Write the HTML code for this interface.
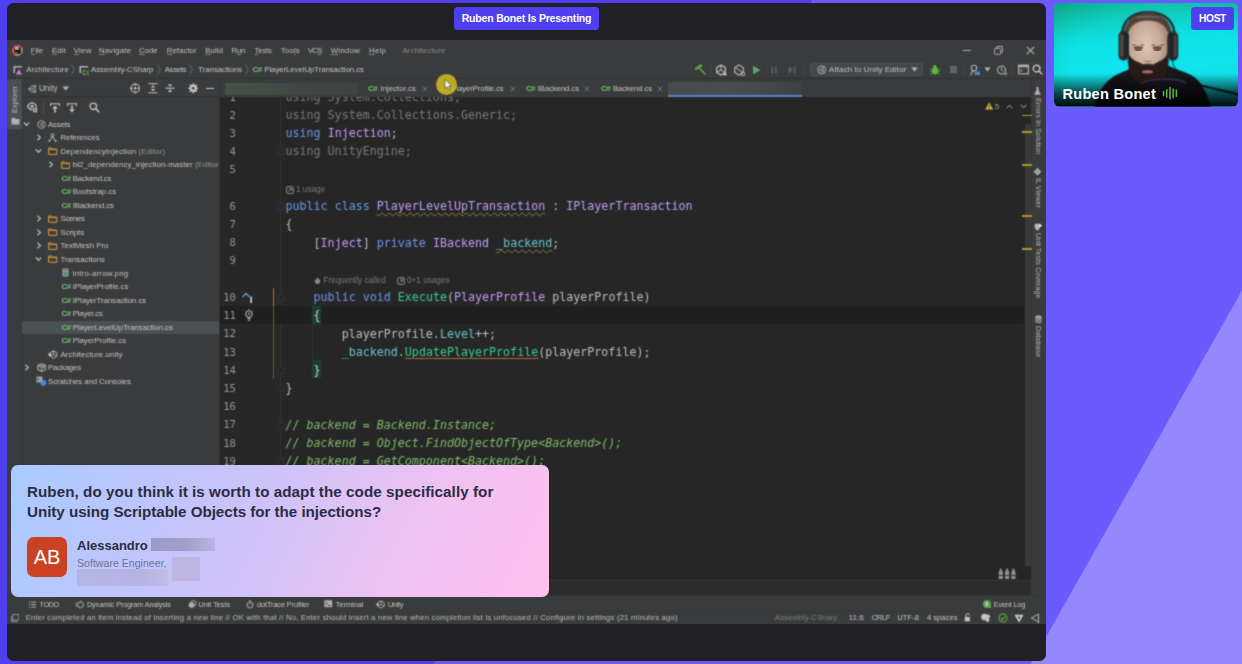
<!DOCTYPE html>
<html lang="en">
<head>
<meta charset="utf-8">
<title>Ruben Bonet Is Presenting</title>
<style>
*{box-sizing:border-box;margin:0;padding:0}
html,body{width:1242px;height:664px;overflow:hidden}
body{position:relative;background:#6b5bff;font-family:"Liberation Sans",sans-serif;}
.abs{position:absolute}
#bgsvg{position:absolute;left:0;top:0;width:1242px;height:664px}
#panel{position:absolute;left:7px;top:3px;width:1039px;height:657.5px;border-radius:6.5px;background:#202025;overflow:hidden}
#present{position:absolute;left:454px;top:7px;width:145px;height:23px;border-radius:3.5px;background:#4f3fee;color:#fff;font-weight:700;font-size:10.5px;letter-spacing:-0.18px;line-height:23px;text-align:center;white-space:nowrap}
/* IDE */
#ide{position:absolute;left:7px;top:40px;width:1039px;height:584px;background:#3a3b3c;overflow:hidden;color:#c6c6c6;font-size:7.8px;filter:url(#soft)}
#ide .t{position:absolute;white-space:pre;line-height:10px;height:10px}
#menubar .t{top:5px}
#nav .t{top:24.8px}

.cl{position:absolute;white-space:pre;font-family:"DejaVu Sans Mono","Liberation Mono",monospace;font-size:11.67px;line-height:18.21px;height:18.21px;color:#bdbdbd}
.ln{position:absolute;width:30px;text-align:right;font-family:"DejaVu Sans Mono","Liberation Mono",monospace;font-size:10.6px;line-height:18.21px;height:18.21px;color:#969696}
.k{color:#6c95eb}.c{color:#c39cf8}.m{color:#39cc8f}.f{color:#66c3cc}.d{color:#787878}.g{color:#7fbb69;font-style:italic}
.wv{text-decoration:underline wavy #8c7c3a 0.5px;text-underline-offset:2px}
.wo{text-decoration:underline #b4693c 1px;text-underline-offset:2px}
.br{color:#d0d0d0}
#ide u{text-decoration:underline;text-underline-offset:1px;text-decoration-thickness:0.5px;text-decoration-color:rgba(190,190,190,0.55)}
/* card */
#card{position:absolute;left:11px;top:464.5px;width:538px;height:132.5px;border-radius:7px;background:linear-gradient(116deg,#a9cbff 0%,#c9c3fa 40%,#f0c2f1 75%,#ffc0ee 100%);overflow:hidden}
#q{position:absolute;left:16px;top:17px;width:500px;font-weight:700;font-size:15.2px;line-height:20px;color:#2c2c44;white-space:pre;letter-spacing:0.08px}
#av{position:absolute;left:16px;top:72.5px;width:40px;height:40px;border-radius:7px;background:#cb4124;color:#fff;font-size:20px;line-height:40px;text-align:center}
#nm{position:absolute;left:66px;top:73px;font-weight:700;font-size:13px;line-height:16px;color:#2c2c44;white-space:pre}
#ttl{position:absolute;left:66px;top:91px;font-size:10.6px;line-height:14px;color:#74748c;white-space:pre}
.red{position:absolute}
/* tile */
#tile{position:absolute;left:1054px;top:3px;width:184px;height:103.5px;border-radius:6px;overflow:hidden;background:#12d8d4}
#tile svg{position:absolute;left:0;top:0;width:184px;height:103.5px}
#host{position:absolute;left:137px;top:4px;width:43px;height:22.5px;border-radius:3.5px;background:#4f3fee;color:#fff;font-weight:700;font-size:10.2px;letter-spacing:-0.35px;line-height:24.3px;text-align:center}
#rb{position:absolute;left:8.5px;top:82.3px;color:#fff;font-weight:700;font-size:14.6px;letter-spacing:0.25px;line-height:18px;white-space:pre}
</style>
</head>
<body>
<svg width="0" height="0" style="position:absolute"><defs>
  <filter id="soft" x="0" y="0" width="100%" height="100%" color-interpolation-filters="sRGB"><feConvolveMatrix order="3" kernelMatrix="1 2 1 2 9 2 1 2 1" divisor="21" edgeMode="duplicate" preserveAlpha="true"/></filter>
</defs></svg>
<svg id="bgsvg" viewBox="0 0 1242 664">
  <polygon points="0,0 812.3,0 433.8,664 0,664" fill="#4f3fee"/>
  <polygon points="1242,290.5 1242,664 1030.8,664" fill="#9488ff"/>
</svg>

<div id="panel"></div>
<div id="present">Ruben Bonet Is Presenting</div>

<div id="ide">
<div class="abs" style="left:212.50px;top:57.00px;width:811.50px;height:483.00px;background:#262626"></div>
<div class="abs" style="left:212.50px;top:57.00px;width:61.50px;height:483.00px;background:#272727;border-right:0.8px solid #323232"></div>
<div class="abs" style="left:212.50px;top:540.00px;width:811.50px;height:15.50px;background:#2b2b2b;border-top:1px solid #383838"></div>
<div class="abs" style="left:0.00px;top:38.30px;width:1039.00px;height:1.00px;background:#2d2f30"></div>
<div class="abs" style="left:0.00px;top:39.00px;width:15.00px;height:50.00px;background:#4c4f51"></div>
<div class="abs" style="left:14.60px;top:39.00px;width:0.80px;height:518.00px;background:#323536"></div>
<div class="abs" style="left:211.70px;top:39.00px;width:0.90px;height:518.00px;background:#2f3132"></div>
<div class="abs" style="left:1024.00px;top:39.00px;width:0.80px;height:517.00px;background:#323536"></div>
<div class="abs" style="left:0.00px;top:555.30px;width:1039.00px;height:0.90px;background:#323536"></div>
<div class="abs" style="left:0.00px;top:570.60px;width:1039.00px;height:0.80px;background:#353839"></div>
<svg class="abs" style="left:5.30px;top:4.80px;width:11px;height:11px;" viewBox="0 0 11 11"><defs><linearGradient id="lg1" x1="0" y1="0" x2="1" y2="1"><stop offset="0" stop-color="#dd3a72"/><stop offset="0.45" stop-color="#d8456a"/><stop offset="0.55" stop-color="#e89a38"/><stop offset="1" stop-color="#3b7fe8"/></linearGradient><linearGradient id="lg2" x1="0" y1="1" x2="1" y2="0"><stop offset="0" stop-color="#f2a634"/><stop offset="0.5" stop-color="#f2a634" stop-opacity="0"/><stop offset="1" stop-color="#b03065"/></linearGradient></defs><path d="M2.500 0.600L8 0.300 10.600 3.500 10.300 8.200 7.500 10.700 3 10.500 0.400 7.500 0.500 3z" fill="url(#lg1)"/><path d="M2.500 0.600L8 0.300 10.600 3.500 10.300 8.200 7.500 10.700 3 10.500 0.400 7.500 0.500 3z" fill="url(#lg2)" opacity="0.750"/><rect x="2.300" y="2.300" width="6.400" height="6.400" fill="#0c0c0c"/><text x="2.700" y="5.400" font-family="Liberation Sans, sans-serif" font-weight="700" font-size="3.300" fill="#fff">RD</text><rect x="2.900" y="7.200" width="2.600" height="0.700" fill="#e8c070"/></svg>
<span class="t" style="left:23.80px;top:5.90px;color:#c0c0c0;font-size:7.80px;letter-spacing:-0.117px;"><u>F</u>ile</span>
<span class="t" style="left:44.90px;top:5.90px;color:#c0c0c0;font-size:7.80px;letter-spacing:0.165px;"><u>E</u>dit</span>
<span class="t" style="left:66.70px;top:5.90px;color:#c0c0c0;font-size:7.80px;letter-spacing:0.283px;"><u>V</u>iew</span>
<span class="t" style="left:92.00px;top:5.90px;color:#c0c0c0;font-size:7.80px;letter-spacing:0.177px;"><u>N</u>avigate</span>
<span class="t" style="left:131.90px;top:5.90px;color:#c0c0c0;font-size:7.80px;letter-spacing:0.013px;"><u>C</u>ode</span>
<span class="t" style="left:159.70px;top:5.90px;color:#c0c0c0;font-size:7.80px;letter-spacing:0.065px;"><u>R</u>efactor</span>
<span class="t" style="left:198.30px;top:5.90px;color:#c0c0c0;font-size:7.80px;letter-spacing:0.071px;"><u>B</u>uild</span>
<span class="t" style="left:224.60px;top:5.90px;color:#c0c0c0;font-size:7.80px;letter-spacing:-0.270px;">R<u>u</u>n</span>
<span class="t" style="left:247.60px;top:5.90px;color:#c0c0c0;font-size:7.80px;letter-spacing:-0.221px;"><u>T</u>ests</span>
<span class="t" style="left:273.80px;top:5.90px;color:#c0c0c0;font-size:7.80px;letter-spacing:0.178px;">Too<u>l</u>s</span>
<span class="t" style="left:300.90px;top:5.90px;color:#c0c0c0;font-size:7.80px;letter-spacing:-0.780px;">VC<u>S</u></span>
<span class="t" style="left:323.70px;top:5.90px;color:#c0c0c0;font-size:7.80px;letter-spacing:0.310px;"><u>W</u>indow</span>
<span class="t" style="left:362.10px;top:5.90px;color:#c0c0c0;font-size:7.80px;letter-spacing:0.214px;"><u>H</u>elp</span>
<span class="t" style="left:395.50px;top:5.90px;color:#8c8c8c;font-size:7.80px;letter-spacing:0.107px;">Architecture</span>
<div class="abs" style="left:955.50px;top:10.00px;width:8.50px;height:1.00px;background:#a8a8a8"></div>
<svg class="abs" style="left:987.00px;top:5.50px;width:9px;height:9px;" viewBox="0 0 9 9"><rect x="0.6" y="2.4" width="6" height="6" rx="1" fill="none" stroke="#b0b0b0" stroke-width="1"/><path d="M2.6 2.2V1.2a.7.7 0 0 1 .7-.7H8a.6.6 0 0 1 .6.6v4.6a.7.7 0 0 1-.7.7H6.8" fill="none" stroke="#b0b0b0" stroke-width="1"/></svg>
<svg class="abs" style="left:1018.50px;top:5.50px;width:9px;height:9px;" viewBox="0 0 9 9"><path d="M0.8 0.8L8.2 8.2M8.2 0.8L0.8 8.2" stroke="#b8b8b8" stroke-width="1.1" fill="none"/></svg>
<svg class="abs" style="left:6.00px;top:25.00px;width:10px;height:10px;" viewBox="0 0 10 10"><path d="M0.5 1h8.5v1.6h-7v5.5h-1.5z" fill="#aeb3b8"/><path d="M6 4.2l3.2 5.3h-6.4z" fill="#c77dd8"/></svg>
<span class="t" style="left:19.20px;top:24.80px;;font-size:7.80px;letter-spacing:0.099px;">Architecture</span>
<svg class="abs" style="left:64.30px;top:24.30px;width:4px;height:11px;" viewBox="0 0 4 11"><path d="M0.500 0.500L3.300 5.500 0.500 10.500" fill="none" stroke="#707274" stroke-width="0.800"/></svg>
<svg class="abs" style="left:71.50px;top:25.00px;width:10px;height:10px;" viewBox="0 0 10 10"><path d="M0.5 1h8.5v1.6h-7v5.5h-1.5z" fill="#aeb3b8"/><text x="3" y="9.5" font-family="Liberation Sans, sans-serif" font-weight="700" font-size="6.5" fill="#62b543">C#</text></svg>
<span class="t" style="left:84.00px;top:24.80px;;font-size:7.80px;letter-spacing:-0.030px;">Assembly-CSharp</span>
<svg class="abs" style="left:149.80px;top:24.30px;width:4px;height:11px;" viewBox="0 0 4 11"><path d="M0.500 0.500L3.300 5.500 0.500 10.500" fill="none" stroke="#707274" stroke-width="0.800"/></svg>
<span class="t" style="left:157.70px;top:24.80px;;font-size:7.80px;letter-spacing:-0.318px;">Assets</span>
<svg class="abs" style="left:182.30px;top:24.30px;width:4px;height:11px;" viewBox="0 0 4 11"><path d="M0.500 0.500L3.300 5.500 0.500 10.500" fill="none" stroke="#707274" stroke-width="0.800"/></svg>
<span class="t" style="left:191.30px;top:24.80px;;font-size:7.80px;letter-spacing:-0.039px;">Transactions</span>
<svg class="abs" style="left:237.80px;top:24.30px;width:4px;height:11px;" viewBox="0 0 4 11"><path d="M0.500 0.500L3.300 5.500 0.500 10.500" fill="none" stroke="#707274" stroke-width="0.800"/></svg>
<span class="t" style="left:245.50px;top:24.80px;color:#74c870;font-weight:700;font-size:8px;letter-spacing:-0.55px">C#</span>
<span class="t" style="left:257.30px;top:24.80px;;font-size:7.80px;letter-spacing:-0.058px;">PlayerLevelUpTransaction.cs</span>
<svg class="abs" style="left:687.50px;top:23.80px;width:11.5px;height:11.5px;" viewBox="0 0 11.5 11.5"><path d="M1.300 4.600L5.800 1.600" stroke="#5fa04b" stroke-width="2.700" stroke-linecap="square"/><path d="M4.300 3.800L10 10" stroke="#5fa04b" stroke-width="1.700" stroke-linecap="round"/></svg>
<div class="abs" style="left:702.80px;top:23.00px;width:0.80px;height:13.00px;background:#444648"></div>
<svg class="abs" style="left:708.00px;top:23.50px;width:12px;height:12px;" viewBox="0 0 12 12"><path d="M6 1l4.3 2.5v5L6 11 1.7 8.500v-5z" fill="none" stroke="#c4c4c4" stroke-width="1.2"/><path d="M6 6V1M6 6l4.300 2.500M6 6l-4.300 2.500" stroke="#c4c4c4" stroke-width="1"/><circle cx="10" cy="10" r="1.6" fill="#c4c4c4"/></svg>
<svg class="abs" style="left:726.00px;top:23.50px;width:12px;height:12px;" viewBox="0 0 12 12"><path d="M6 1l4.3 2.5v5L6 11 1.7 8.500v-5z" fill="none" stroke="#b8b8b8" stroke-width="1.2"/><path d="M3 4l6 4" stroke="#b8b8b8" stroke-width="1"/><circle cx="10" cy="10" r="1.800" fill="none" stroke="#b8b8b8" stroke-width="1"/></svg>
<svg class="abs" style="left:744.00px;top:23.50px;width:11px;height:12px;" viewBox="0 0 11 12"><path d="M2 1.800l7.500 4.200-7.500 4.200z" fill="#59a869"/></svg>
<svg class="abs" style="left:763.00px;top:24.50px;width:8px;height:10px;" viewBox="0 0 8 10"><rect x="1.500" y="1.500" width="1.500" height="7" fill="#5e6163"/><rect x="5" y="1.500" width="1.500" height="7" fill="#5e6163"/></svg>
<svg class="abs" style="left:780.00px;top:24.50px;width:10px;height:10px;" viewBox="0 0 10 10"><path d="M1.500 1.500l5 3.500-5 3.500z" fill="#5e6163"/><rect x="7" y="1.500" width="1.400" height="7" fill="#5e6163"/></svg>
<div class="abs" style="left:797.00px;top:23.00px;width:0.80px;height:13.00px;background:#424446"></div>
<div class="abs" style="left:802.60px;top:23.00px;width:113.40px;height:13.20px;background:#45484a;border:0.600px solid #4c4f51;border-radius:2px"></div>
<svg class="abs" style="left:809.80px;top:24.60px;width:9.5px;height:9.5px;" viewBox="0 0 10.5 10.5"><circle cx="5.250" cy="5.250" r="4.300" fill="none" stroke="#bdbdbd" stroke-width="1"/><path d="M6.800 2.800L3 5.300l3.800 2.500z" fill="none" stroke="#bdbdbd" stroke-width="0.900"/></svg>
<span class="t" style="left:822.00px;top:25.10px;color:#c2c2c2;font-size:7.80px;letter-spacing:0.192px;">Attach to Unity Editor</span>
<svg class="abs" style="left:904.00px;top:27.00px;width:7px;height:5px;" viewBox="0 0 7 5"><path d="M0.300 0.500h6.400L3.500 4.500z" fill="#b4b4b4"/></svg>
<svg class="abs" style="left:922.00px;top:23.50px;width:12px;height:12px;" viewBox="0 0 12 12"><ellipse cx="6" cy="6.800" rx="3" ry="3.800" fill="#62b543"/><circle cx="6" cy="2.800" r="1.700" fill="#62b543"/><path d="M1.300 4.500l2 1.200M10.700 4.500l-2 1.200M1 7.200h2.300M11 7.200H8.700M1.500 10.300l2-1.300M10.500 10.300l-2-1.300" stroke="#62b543" stroke-width="0.900"/></svg>
<div class="abs" style="left:942.50px;top:25.70px;width:7.00px;height:7.00px;background:#606365"></div>
<div class="abs" style="left:957.00px;top:23.00px;width:0.80px;height:13.00px;background:#424446"></div>
<svg class="abs" style="left:962.00px;top:23.50px;width:12px;height:12px;" viewBox="0 0 12 12"><circle cx="5" cy="4" r="2.700" fill="none" stroke="#b0b0b0" stroke-width="1.100"/><path d="M2 11c0-2.500 1.500-3.800 3-3.800" stroke="#b0b0b0" stroke-width="1.100" fill="none"/><rect x="5.500" y="7.500" width="5.500" height="3.500" fill="#4a88c7"/></svg>
<svg class="abs" style="left:976.50px;top:27.30px;width:7px;height:5px;" viewBox="0 0 7 5"><path d="M0.300 0.500h6.400L3.500 4.500z" fill="#b4b4b4"/></svg>
<svg class="abs" style="left:989.00px;top:23.50px;width:13px;height:12px;" viewBox="0 0 13 12"><circle cx="5.500" cy="6" r="4" fill="none" stroke="#b8b8b8" stroke-width="1.100"/><path d="M5.500 3.500V6l1.800 1" stroke="#b8b8b8" stroke-width="1" fill="none"/><path d="M8.500 7.500l3.500 2.200-3.500 2.200z" fill="#59a869"/></svg>
<div class="abs" style="left:1005.00px;top:23.00px;width:0.80px;height:13.00px;background:#424446"></div>
<svg class="abs" style="left:1010.50px;top:24.00px;width:11px;height:11px;" viewBox="0 0 11 11"><rect x="0.600" y="1.200" width="9.800" height="8.600" fill="none" stroke="#b8b8b8" stroke-width="1.100"/><rect x="0.600" y="1.200" width="9.800" height="2" fill="#b8b8b8"/><path d="M2.500 5l2 1.500-2 1.500z" fill="#b8b8b8"/></svg>
<svg class="abs" style="left:1025.00px;top:24.00px;width:11px;height:11px;" viewBox="0 0 11 11"><circle cx="4.500" cy="4.500" r="3.300" fill="none" stroke="#c0c0c0" stroke-width="1.400"/><path d="M7 7l3.200 3.200" stroke="#c0c0c0" stroke-width="1.600"/></svg>
<span class="t" style="left:3.30px;top:73.20px;transform:rotate(-90deg);transform-origin:0 0;font-size:7.300px;color:#b8b8b8">Explorer</span>
<svg class="abs" style="left:3.50px;top:76.80px;width:9px;height:8px;" viewBox="0 0 9 8"><path d="M0.500 0.800h3l1 1.200h4v5.500h-8z" fill="#aeb3b8"/></svg>
<svg class="abs" style="left:21.00px;top:44.50px;width:8.5px;height:8px;" viewBox="0 0 8.5 8"><path d="M0.600 4L3.200 1.200 7.600 0.600 7 3.300 7.600 7.400 3.200 6.800z" fill="none" stroke="#b4b4b4" stroke-width="0.900"/><path d="M0.600 4H4.400L7.600 0.600M4.400 4L7.600 7.400" fill="none" stroke="#b4b4b4" stroke-width="0.900"/></svg>
<span class="t" style="left:31.90px;top:44.00px;color:#c0c0c0;font-size:8.2px">Unity</span>
<svg class="abs" style="left:55.30px;top:46.30px;width:7.5px;height:5px;" viewBox="0 0 7.5 5"><path d="M0.300 0.500h6.900L3.750 4.600z" fill="#b4b4b4"/></svg>
<svg class="abs" style="left:122.50px;top:43.30px;width:10.5px;height:10.5px;" viewBox="0 0 10.5 10.5"><circle cx="5.250" cy="5.250" r="4.200" fill="none" stroke="#c4c4c4" stroke-width="1.100"/><circle cx="5.250" cy="5.250" r="1.300" fill="#c4c4c4"/><path d="M5.250 0v3M5.250 7.500v3M0 5.250h3M7.500 5.250h3" stroke="#c4c4c4" stroke-width="1"/></svg>
<svg class="abs" style="left:141.00px;top:43.30px;width:10px;height:10.5px;" viewBox="0 0 10 10.5"><path d="M0.500 0.800h9M0.500 9.700h9" stroke="#c4c4c4" stroke-width="1.100"/><path d="M5 2.200l2.200 2.200h-4.400zM5 8.300l2.200-2.200h-4.400z" fill="#c4c4c4"/></svg>
<svg class="abs" style="left:158.00px;top:43.30px;width:10px;height:10.5px;" viewBox="0 0 10 10.5"><path d="M0.500 5.250h9" stroke="#c4c4c4" stroke-width="1.100"/><path d="M5 4l2.200-2.600h-4.400zM5 6.500l2.200 2.600h-4.400z" fill="#c4c4c4"/></svg>
<svg class="abs" style="left:180.50px;top:43.00px;width:10.5px;height:10.5px;" viewBox="0 0 10.5 10.5"><circle cx="5.250" cy="5.250" r="2.600" fill="none" stroke="#c4c4c4" stroke-width="2.100"/><path d="M5.250 0.300v10M0.300 5.250h10M1.750 1.750l7 7M8.750 1.750l-7 7" stroke="#c4c4c4" stroke-width="1.500"/><circle cx="5.250" cy="5.250" r="1.300" fill="#3a3b3c"/></svg>
<div class="abs" style="left:198.70px;top:47.80px;width:8.50px;height:1.20px;background:#c4c4c4"></div>
<svg class="abs" style="left:20.30px;top:61.80px;width:11px;height:11px;" viewBox="0 0 11 11"><path d="M0.500 4.300C2 1.800 3.500 0.900 5 0.900s3 0.900 4.500 3.400C8 6.800 6.500 7.700 5 7.700S2 6.800 0.500 4.300z" fill="none" stroke="#c4c4c4" stroke-width="1.200"/><circle cx="5" cy="4.300" r="1.500" fill="#c4c4c4"/><rect x="5.800" y="5.300" width="4.700" height="5.400" rx="0.600" fill="#c4c4c4" stroke="#3a3b3c" stroke-width="0.700"/><path d="M7 7.200h2.300M7 8.800h2.300" stroke="#3a3b3c" stroke-width="0.700"/></svg>
<div class="abs" style="left:36.30px;top:60.50px;width:0.80px;height:13.00px;background:#4a4c4e"></div>
<svg class="abs" style="left:42.80px;top:62.50px;width:10px;height:10px;" viewBox="0 0 10 10"><path d="M0.600 3V0.800h8.800V3" fill="none" stroke="#c4c4c4" stroke-width="1.100"/><path d="M5 2.600l2.800 3h-2v4h-1.600v-4h-2z" fill="#c4c4c4"/></svg>
<svg class="abs" style="left:60.20px;top:62.50px;width:10px;height:10px;" viewBox="0 0 10 10"><path d="M0.600 3V0.800h8.800V3" fill="none" stroke="#c4c4c4" stroke-width="1.100"/><path d="M5 9.600l2.800-3h-2v-4h-1.600v4h-2z" fill="#c4c4c4"/></svg>
<svg class="abs" style="left:81.80px;top:62.00px;width:11px;height:11px;" viewBox="0 0 11 11"><circle cx="4.300" cy="4.300" r="3.200" fill="none" stroke="#c4c4c4" stroke-width="1.400"/><path d="M6.800 6.800l3.300 3.300" stroke="#c4c4c4" stroke-width="1.600"/></svg>
<div class="abs" style="left:15.40px;top:56.40px;width:196.30px;height:0.80px;background:#303233"></div>
<div class="abs" style="left:15.40px;top:280.50px;width:196.30px;height:13.50px;background:#4b5052"></div>
<div class="abs" style="left:15.399999999999999px;top:76px;width:196.300px;height:480px;overflow:hidden">
<svg class="abs" style="left:0.80px;top:5.00px;width:7px;height:6px;" viewBox="0 0 7 6"><path d="M0.800 1.500L3.500 4.300 6.200 1.500" fill="none" stroke="#b8b8b8" stroke-width="1.250"/></svg>
<svg class="abs" style="left:14.40px;top:3.50px;width:9px;height:9px;" viewBox="0 0 9 9"><circle cx="4.500" cy="4.500" r="3.800" fill="none" stroke="#b4b4b4" stroke-width="0.900"/><path d="M5.800 2.500L2.700 4.500l3.100 2z" fill="none" stroke="#b4b4b4" stroke-width="0.800"/></svg>
<span class="t" style="left:25.70px;top:3.70px;;font-size:7.80px;letter-spacing:-0.201px;">Assets</span>
<svg class="abs" style="left:13.50px;top:18.03px;width:6px;height:7px;" viewBox="0 0 6 7"><path d="M1.500 0.800L4.300 3.500 1.500 6.200" fill="none" stroke="#b8b8b8" stroke-width="1.250"/></svg>
<svg class="abs" style="left:26.10px;top:17.03px;width:9px;height:9px;" viewBox="0 0 9 9"><circle cx="4.500" cy="2.300" r="1.500" fill="none" stroke="#c0c0c0" stroke-width="1"/><path d="M4.500 3.800L1.500 8M4.500 3.800L7.500 8" stroke="#c0c0c0" stroke-width="1"/><circle cx="1.300" cy="8" r="0.900" fill="#c0c0c0"/><circle cx="7.700" cy="8" r="0.900" fill="#c0c0c0"/></svg>
<span class="t" style="left:38.10px;top:17.23px;;font-size:7.80px;letter-spacing:-0.089px;">References</span>
<svg class="abs" style="left:13.00px;top:32.06px;width:7px;height:6px;" viewBox="0 0 7 6"><path d="M0.800 1.500L3.500 4.300 6.200 1.500" fill="none" stroke="#b8b8b8" stroke-width="1.250"/></svg>
<svg class="abs" style="left:26.10px;top:31.06px;width:9.5px;height:8px;" viewBox="0 0 9.5 8"><path d="M0.700 1h2.800l0.900 1.100h4.400v5.200h-8.100z" fill="none" stroke="#dca040" stroke-width="1"/><path d="M0.700 2.600h8" stroke="#e0a23c" stroke-width="0.800"/></svg>
<span class="t" style="left:38.10px;top:30.76px;;font-size:7.80px;letter-spacing:0.150px;">DependencyInjection <span style="color:#979797">(Editor)</span></span>
<svg class="abs" style="left:25.40px;top:45.09px;width:6px;height:7px;" viewBox="0 0 6 7"><path d="M1.500 0.800L4.300 3.500 1.500 6.200" fill="none" stroke="#b8b8b8" stroke-width="1.250"/></svg>
<svg class="abs" style="left:38.60px;top:44.59px;width:9.5px;height:8px;" viewBox="0 0 9.5 8"><path d="M0.700 1h2.800l0.900 1.100h4.400v5.200h-8.100z" fill="none" stroke="#dca040" stroke-width="1"/><path d="M0.700 2.600h8" stroke="#e0a23c" stroke-width="0.800"/></svg>
<span class="t" style="left:50.35px;top:44.29px;;font-size:7.80px;letter-spacing:0.108px;">bi2_dependency_injection-master <span style="color:#979797">(Editor)</span></span>
<span class="t" style="left:39.10px;top:57.82px;color:#74c870;font-weight:700;font-size:8px;letter-spacing:-0.550px">C#</span>
<span class="t" style="left:50.35px;top:57.82px;;font-size:7.80px;letter-spacing:-0.172px;">Backend.cs</span>
<span class="t" style="left:39.10px;top:71.35px;color:#74c870;font-weight:700;font-size:8px;letter-spacing:-0.550px">C#</span>
<span class="t" style="left:50.35px;top:71.35px;;font-size:7.80px;letter-spacing:0.004px;">Bootstrap.cs</span>
<span class="t" style="left:39.10px;top:84.88px;color:#74c870;font-weight:700;font-size:8px;letter-spacing:-0.550px">C#</span>
<span class="t" style="left:50.35px;top:84.88px;;font-size:7.80px;letter-spacing:-0.126px;">IBackend.cs</span>
<svg class="abs" style="left:13.50px;top:99.21px;width:6px;height:7px;" viewBox="0 0 6 7"><path d="M1.500 0.800L4.300 3.500 1.500 6.200" fill="none" stroke="#b8b8b8" stroke-width="1.250"/></svg>
<svg class="abs" style="left:26.10px;top:98.71px;width:9.5px;height:8px;" viewBox="0 0 9.5 8"><path d="M0.700 1h2.800l0.900 1.100h4.400v5.200h-8.100z" fill="none" stroke="#dca040" stroke-width="1"/><path d="M0.700 2.600h8" stroke="#e0a23c" stroke-width="0.800"/></svg>
<span class="t" style="left:38.10px;top:98.41px;;font-size:7.80px;letter-spacing:-0.303px;">Scenes</span>
<svg class="abs" style="left:13.50px;top:112.74px;width:6px;height:7px;" viewBox="0 0 6 7"><path d="M1.500 0.800L4.300 3.500 1.500 6.200" fill="none" stroke="#b8b8b8" stroke-width="1.250"/></svg>
<svg class="abs" style="left:26.10px;top:112.24px;width:9.5px;height:8px;" viewBox="0 0 9.5 8"><path d="M0.700 1h2.800l0.900 1.100h4.400v5.200h-8.100z" fill="none" stroke="#dca040" stroke-width="1"/><path d="M0.700 2.600h8" stroke="#e0a23c" stroke-width="0.800"/></svg>
<span class="t" style="left:38.10px;top:111.94px;;font-size:7.80px;letter-spacing:-0.034px;">Scripts</span>
<svg class="abs" style="left:13.50px;top:126.27px;width:6px;height:7px;" viewBox="0 0 6 7"><path d="M1.500 0.800L4.300 3.500 1.500 6.200" fill="none" stroke="#b8b8b8" stroke-width="1.250"/></svg>
<svg class="abs" style="left:26.10px;top:125.77px;width:9.5px;height:8px;" viewBox="0 0 9.5 8"><path d="M0.700 1h2.800l0.900 1.100h4.400v5.200h-8.100z" fill="none" stroke="#dca040" stroke-width="1"/><path d="M0.700 2.600h8" stroke="#e0a23c" stroke-width="0.800"/></svg>
<span class="t" style="left:38.10px;top:125.47px;;font-size:7.80px;letter-spacing:0.018px;">TextMesh Pro</span>
<svg class="abs" style="left:13.00px;top:140.30px;width:7px;height:6px;" viewBox="0 0 7 6"><path d="M0.800 1.500L3.500 4.300 6.200 1.500" fill="none" stroke="#b8b8b8" stroke-width="1.250"/></svg>
<svg class="abs" style="left:26.10px;top:139.30px;width:9.5px;height:8px;" viewBox="0 0 9.5 8"><path d="M0.700 1h2.800l0.900 1.100h4.400v5.200h-8.100z" fill="none" stroke="#dca040" stroke-width="1"/><path d="M0.700 2.600h8" stroke="#e0a23c" stroke-width="0.800"/></svg>
<span class="t" style="left:38.10px;top:139.00px;;font-size:7.80px;letter-spacing:0.011px;">Transactions</span>
<svg class="abs" style="left:39.60px;top:152.33px;width:7px;height:9px;" viewBox="0 0 7 9"><rect x="0.500" y="0.500" width="6" height="8" rx="0.800" fill="#9fa6ad"/><rect x="1.500" y="4" width="4" height="3.500" fill="#5a8a6a"/><path d="M1.500 2h4" stroke="#3a3b3c" stroke-width="0.800"/></svg>
<span class="t" style="left:50.35px;top:152.53px;;font-size:7.80px;letter-spacing:0.238px;">intro-arrow.png</span>
<span class="t" style="left:39.10px;top:166.06px;color:#74c870;font-weight:700;font-size:8px;letter-spacing:-0.550px">C#</span>
<span class="t" style="left:50.35px;top:166.06px;;font-size:7.80px;letter-spacing:-0.044px;">IPlayerProfile.cs</span>
<span class="t" style="left:39.10px;top:179.59px;color:#74c870;font-weight:700;font-size:8px;letter-spacing:-0.550px">C#</span>
<span class="t" style="left:50.35px;top:179.59px;;font-size:7.80px;letter-spacing:-0.062px;">IPlayerTransaction.cs</span>
<span class="t" style="left:39.10px;top:193.12px;color:#74c870;font-weight:700;font-size:8px;letter-spacing:-0.550px">C#</span>
<span class="t" style="left:50.35px;top:193.12px;;font-size:7.80px;letter-spacing:-0.183px;">Player.cs</span>
<span class="t" style="left:39.10px;top:206.65px;color:#74c870;font-weight:700;font-size:8px;letter-spacing:-0.550px">C#</span>
<span class="t" style="left:50.35px;top:206.65px;;font-size:7.80px;letter-spacing:-0.039px;">PlayerLevelUpTransaction.cs</span>
<span class="t" style="left:39.10px;top:220.18px;color:#74c870;font-weight:700;font-size:8px;letter-spacing:-0.550px">C#</span>
<span class="t" style="left:50.35px;top:220.18px;;font-size:7.80px;letter-spacing:-0.055px;">PlayerProfile.cs</span>
<svg class="abs" style="left:25.60px;top:233.51px;width:10px;height:9px;" viewBox="0 0 10 9"><path d="M5.500 0.800l3.300 1.900v3.600L5.500 8.200 2.200 6.300v-3.600z" fill="none" stroke="#c4c4c4" stroke-width="0.900"/><path d="M5.500 4.500V0.800M5.500 4.500l3.300 1.800M5.500 4.500l-3.300 1.800" stroke="#c4c4c4" stroke-width="0.800"/><circle cx="1.800" cy="4.500" r="1.500" fill="#c4c4c4"/></svg>
<span class="t" style="left:38.10px;top:233.71px;;font-size:7.80px;letter-spacing:0.102px;">Architecture.unity</span>
<svg class="abs" style="left:1.30px;top:248.04px;width:6px;height:7px;" viewBox="0 0 6 7"><path d="M1.500 0.800L4.300 3.500 1.500 6.200" fill="none" stroke="#b8b8b8" stroke-width="1.250"/></svg>
<svg class="abs" style="left:14.40px;top:247.04px;width:9.5px;height:9px;" viewBox="0 0 9.5 9"><path d="M4.800 0.700l3.900 1.700v4.200L4.800 8.400 0.900 6.600v-4.200z" fill="none" stroke="#c0c0c0" stroke-width="1"/><path d="M0.900 2.400l3.900 1.800 3.900-1.800M4.800 4.200v4.200" stroke="#c0c0c0" stroke-width="0.900" fill="none"/><path d="M2.700 1.600l3.900 1.700v2" stroke="#c0c0c0" stroke-width="0.800" fill="none"/></svg>
<span class="t" style="left:25.70px;top:247.24px;;font-size:7.80px;letter-spacing:-0.182px;">Packages</span>
<svg class="abs" style="left:13.40px;top:260.07px;width:11px;height:10px;" viewBox="0 0 11 10"><path d="M0.500 0.500h6v6h-6z" fill="#9fa6ad"/><path d="M1.500 2l1.500 1.200-1.500 1.200" stroke="#3a3b3c" stroke-width="0.800" fill="none"/><circle cx="7.500" cy="6.800" r="2.900" fill="#3d8ee0"/></svg>
<span class="t" style="left:25.70px;top:260.77px;;font-size:7.80px;letter-spacing:-0.075px;">Scratches and Consoles</span>
</div>
<div class="abs" style="left:212.50px;top:265.77px;width:804.00px;height:17.81px;background:#1f1f1f"></div>
<div class="abs" style="left:265.60px;top:248.16px;width:1.50px;height:18.21px;background:#a8742c"></div>
<div class="abs" style="left:265.60px;top:266.37px;width:1.50px;height:72.84px;background:#5d5c33"></div>
<div class="abs" style="left:305.40px;top:266.10px;width:8.50px;height:17.60px;background:#1a3f33"></div>
<div class="abs" style="left:305.40px;top:320.30px;width:8.50px;height:17.70px;background:#1a3f33"></div>
<div class="abs" style="left:304.60px;top:283.70px;width:0.80px;height:36.60px;background:#313131"></div>
<div class="cl" style="left:278.50px;top:47.85px"><span class="d">using System.Collections;</span></div>
<div class="cl" style="left:278.50px;top:66.06px"><span class="d">using System.Collections.Generic;</span></div>
<div class="cl" style="left:278.50px;top:84.27px"><span class="k">using</span> <span class="c">Injection</span>;</div>
<div class="cl" style="left:278.50px;top:102.48px"><span class="d">using UnityEngine;</span></div>
<div class="cl" style="left:278.50px;top:157.11px"><span class="k">public</span> <span class="k">class</span> <span class="c wv">PlayerLevelUpTransaction</span> : <span class="c">IPlayerTransaction</span></div>
<div class="cl" style="left:278.50px;top:175.32px">{</div>
<div class="cl" style="left:278.50px;top:193.53px">    [<span class="c">Inject</span>] <span class="k">private</span> <span class="c">IBackend</span> <span class="f wv">_backend</span>;</div>
<div class="cl" style="left:278.50px;top:248.16px">    <span class="k">public</span> <span class="k">void</span> <span class="m">Execute</span>(<span class="c">PlayerProfile</span> playerProfile)</div>
<div class="cl" style="left:278.50px;top:266.37px">    <span class="br">{</span></div>
<div class="cl" style="left:278.50px;top:284.58px">        playerProfile.<span class="f">Level</span>++;</div>
<div class="cl" style="left:278.50px;top:302.79px">        <span class="f">_backend</span>.<span class="m wo">UpdatePlayerProfile</span>(playerProfile);</div>
<div class="cl" style="left:278.50px;top:321.00px">    <span class="br">}</span></div>
<div class="cl" style="left:278.50px;top:339.21px">}</div>
<div class="cl" style="left:278.50px;top:375.63px"><span class="g">// backend = Backend.Instance;</span></div>
<div class="cl" style="left:278.50px;top:393.84px"><span class="g">// backend = Object.FindObjectOfType&lt;Backend&gt;();</span></div>
<div class="cl" style="left:278.50px;top:412.05px"><span class="g">// backend = GetComponent&lt;Backend&gt;();</span></div>
<div class="ln" style="left:199.00px;top:47.60px">1</div>
<div class="ln" style="left:199.00px;top:65.81px">2</div>
<div class="ln" style="left:199.00px;top:84.02px">3</div>
<div class="ln" style="left:199.00px;top:102.23px">4</div>
<div class="ln" style="left:199.00px;top:120.44px">5</div>
<div class="ln" style="left:199.00px;top:156.86px">6</div>
<div class="ln" style="left:199.00px;top:175.07px">7</div>
<div class="ln" style="left:199.00px;top:193.28px">8</div>
<div class="ln" style="left:199.00px;top:211.49px">9</div>
<div class="ln" style="left:199.00px;top:247.91px">10</div>
<div class="ln" style="left:199.00px;top:266.12px">11</div>
<div class="ln" style="left:199.00px;top:284.33px">12</div>
<div class="ln" style="left:199.00px;top:302.54px">13</div>
<div class="ln" style="left:199.00px;top:320.75px">14</div>
<div class="ln" style="left:199.00px;top:338.96px">15</div>
<div class="ln" style="left:199.00px;top:357.17px">16</div>
<div class="ln" style="left:199.00px;top:375.38px">17</div>
<div class="ln" style="left:199.00px;top:393.59px">18</div>
<div class="ln" style="left:199.00px;top:411.80px">19</div>
<svg class="abs" style="left:278.50px;top:145.60px;width:8px;height:8px;" viewBox="0 0 8 8"><rect x="0.6" y="0.6" width="6.8" height="6.8" rx="1" fill="none" stroke="#8a8a8a" stroke-width="1"/><path d="M2.3 5.700L5.500 2.500M3.200 2.300h2.500v2.500" stroke="#8a8a8a" stroke-width="1" fill="none"/></svg>
<span class="t" style="left:289.00px;top:144.81px;color:#7a7a7a;font-size:8.2px">1 usage</span>
<svg class="abs" style="left:306.50px;top:236.25px;width:7px;height:8.5px;" viewBox="0 0 7 8.5"><path d="M3.500 0.500c0.300 1.700 2.700 2.600 2.700 4.800a2.700 2.700 0 0 1-5.400 0c0-1.200 0.800-1.700 1.200-2.700 0.500 0.600 0.700 1 0.800 1.500 0.700-1 0.900-2.200 0.700-3.600z" fill="#8a8a8a"/></svg>
<span class="t" style="left:316.50px;top:235.86px;color:#7a7a7a;font-size:8.2px">Frequently called</span>
<svg class="abs" style="left:390.00px;top:236.65px;width:8px;height:8px;" viewBox="0 0 8 8"><rect x="0.6" y="0.6" width="6.8" height="6.8" rx="1" fill="none" stroke="#8a8a8a" stroke-width="1"/><path d="M2.300 5.700L5.500 2.500M3.200 2.300h2.500v2.500" stroke="#8a8a8a" stroke-width="1" fill="none"/></svg>
<span class="t" style="left:400.00px;top:235.86px;color:#7a7a7a;font-size:8.2px">0+1 usages</span>
<svg class="abs" style="left:233.50px;top:250.66px;width:12px;height:13px;" viewBox="0 0 12 13"><path d="M1.500 6L5 2.500 8.500 6" fill="none" stroke="#4d9be0" stroke-width="1.500"/><rect x="9.300" y="5.500" width="1.600" height="6.500" fill="#d8d8d8"/></svg>
<svg class="abs" style="left:236.50px;top:269.37px;width:10px;height:13px;" viewBox="0 0 10 13"><circle cx="5" cy="5" r="3.300" fill="none" stroke="#c8c8c8" stroke-width="1"/><path d="M3.500 9.500h3M3.800 11.200h2.400" stroke="#c8c8c8" stroke-width="1"/><path d="M5 3.500v2.500M3.800 4.800h2.400" stroke="#c8c8c8" stroke-width="0.700"/><path d="M5 0v0.800M0.500 1.500l0.700 0.600M9.500 1.500l-0.700 0.600" stroke="#c8c8c8" stroke-width="0.700"/></svg>
<svg class="abs" style="left:269.50px;top:107.48px;width:8px;height:8px;" viewBox="0 0 8 8"><path d="M0.700 3.200L4 0.700l3.300 2.500v4.100h-6.600z" fill="#272727" stroke="#383838" stroke-width="0.900"/></svg>
<svg class="abs" style="left:269.50px;top:162.11px;width:8px;height:8px;" viewBox="0 0 8 8"><path d="M0.700 3.200L4 0.700l3.300 2.500v4.100h-6.600z" fill="#272727" stroke="#383838" stroke-width="0.900"/></svg>
<svg class="abs" style="left:269.50px;top:253.16px;width:8px;height:8px;" viewBox="0 0 8 8"><path d="M0.700 3.200L4 0.700l3.300 2.500v4.100h-6.600z" fill="#272727" stroke="#383838" stroke-width="0.900"/></svg>
<svg class="abs" style="left:269.50px;top:326.00px;width:8px;height:8px;" viewBox="0 0 8 8"><path d="M0.700 3.200L4 0.700l3.300 2.500v4.100h-6.600z" fill="#272727" stroke="#383838" stroke-width="0.900"/></svg>
<svg class="abs" style="left:269.50px;top:344.21px;width:8px;height:8px;" viewBox="0 0 8 8"><path d="M0.700 3.200L4 0.700l3.300 2.500v4.100h-6.600z" fill="#272727" stroke="#383838" stroke-width="0.900"/></svg>
<svg class="abs" style="left:269.50px;top:380.63px;width:8px;height:8px;" viewBox="0 0 8 8"><path d="M0.700 3.200L4 0.700l3.300 2.500v4.100h-6.600z" fill="#272727" stroke="#383838" stroke-width="0.900"/></svg>
<svg class="abs" style="left:269.50px;top:417.05px;width:8px;height:8px;" viewBox="0 0 8 8"><path d="M0.700 3.200L4 0.700l3.300 2.500v4.100h-6.600z" fill="#272727" stroke="#383838" stroke-width="0.900"/></svg>
<svg class="abs" style="left:978.00px;top:62.00px;width:8.5px;height:8px;" viewBox="0 0 8.5 8"><path d="M4.250 0.400L8.200 7.600H0.300z" fill="#e2b93d"/><rect x="3.800" y="2.800" width="0.900" height="2.800" fill="#262626"/><rect x="3.800" y="6.100" width="0.900" height="0.800" fill="#262626"/></svg>
<span class="t" style="left:988.00px;top:62.00px;color:#a8a8a8;font-size:7.600px">5</span>
<svg class="abs" style="left:999.00px;top:63.80px;width:7px;height:5px;" viewBox="0 0 7 5"><path d="M0.700 4.200L3.500 1.200 6.300 4.200" fill="none" stroke="#b0b0b0" stroke-width="1"/></svg>
<svg class="abs" style="left:1013.00px;top:63.80px;width:7px;height:5px;" viewBox="0 0 7 5"><path d="M0.700 0.800L3.500 3.800 6.300 0.800" fill="none" stroke="#b0b0b0" stroke-width="1"/></svg>
<div class="abs" style="left:1017.50px;top:84.00px;width:6.50px;height:442.00px;background:#3a3a3b"></div>
<div class="abs" style="left:1015.00px;top:74.50px;width:9.50px;height:1.70px;background:#b3962c"></div>
<div class="abs" style="left:1015.00px;top:91.20px;width:9.50px;height:1.70px;background:#b3962c"></div>
<div class="abs" style="left:1015.00px;top:124.20px;width:9.50px;height:1.70px;background:#b3962c"></div>
<div class="abs" style="left:1015.00px;top:174.90px;width:9.50px;height:1.70px;background:#b3962c"></div>
<div class="abs" style="left:1015.00px;top:208.00px;width:9.50px;height:1.70px;background:#b3962c"></div>
<svg class="abs" style="left:991.00px;top:526.50px;width:19px;height:12.5px;" viewBox="0 0 19 12.5"><path d="M0.7 12V5L2.8 0.800 4.9 5v7z" fill="#8f8f8f"/><rect x="0.7" y="8" width="4.200" height="1" fill="#3a3a3a"/><path d="M7.0 12V5L9.1 0.800 11.2 5v7z" fill="#8f8f8f"/><rect x="7.0" y="8" width="4.200" height="1" fill="#3a3a3a"/><path d="M13.299999999999999 12V5L15.399999999999999 0.800 17.5 5v7z" fill="#8f8f8f"/><rect x="13.299999999999999" y="8" width="4.200" height="1" fill="#3a3a3a"/></svg>
<div class="abs" style="left:212.50px;top:39.00px;width:811.50px;height:18.00px;background:#3a3b3c"></div>
<div class="abs" style="left:217.80px;top:43.10px;width:133.70px;height:11.80px;background:linear-gradient(90deg,#445246 0%,#424c45 35%,#414643 65%,#404341 100%)"></div>
<span class="t" style="left:361.00px;top:44.00px;color:#74c870;font-weight:700;font-size:8px;letter-spacing:-0.550px">C#</span>
<span class="t" style="left:373.60px;top:44.00px;;font-size:7.70px;letter-spacing:0.058px;">Injector.cs</span>
<svg class="abs" style="left:414.90px;top:45.50px;width:6px;height:6px;" viewBox="0 0 6 6"><path d="M0.700 0.700l4.600 4.600M5.300 0.700L0.700 5.300" stroke="#7d7d7d" stroke-width="0.900"/></svg>
<span class="t" style="left:434.00px;top:44.00px;color:#74c870;font-weight:700;font-size:8px;letter-spacing:-0.550px">C#</span>
<span class="t" style="left:444.50px;top:44.00px;;font-size:7.70px;letter-spacing:-0.087px;">PlayerProfile.cs</span>
<svg class="abs" style="left:502.50px;top:45.50px;width:6px;height:6px;" viewBox="0 0 6 6"><path d="M0.700 0.700l4.600 4.600M5.300 0.700L0.700 5.300" stroke="#7d7d7d" stroke-width="0.900"/></svg>
<span class="t" style="left:518.90px;top:44.00px;color:#74c870;font-weight:700;font-size:8px;letter-spacing:-0.550px">C#</span>
<span class="t" style="left:530.80px;top:44.00px;;font-size:7.70px;letter-spacing:-0.068px;">IBackend.cs</span>
<svg class="abs" style="left:577.00px;top:45.50px;width:6px;height:6px;" viewBox="0 0 6 6"><path d="M0.700 0.700l4.600 4.600M5.300 0.700L0.700 5.300" stroke="#7d7d7d" stroke-width="0.900"/></svg>
<span class="t" style="left:594.00px;top:44.00px;color:#74c870;font-weight:700;font-size:8px;letter-spacing:-0.550px">C#</span>
<span class="t" style="left:606.00px;top:44.00px;;font-size:7.70px;letter-spacing:-0.081px;">Backend.cs</span>
<svg class="abs" style="left:650.00px;top:45.50px;width:6px;height:6px;" viewBox="0 0 6 6"><path d="M0.700 0.700l4.600 4.600M5.300 0.700L0.700 5.300" stroke="#7d7d7d" stroke-width="0.900"/></svg>
<div class="abs" style="left:660.50px;top:41.50px;width:134.00px;height:14.00px;background:linear-gradient(90deg,#474b4e 0%,#4a4e51 45%,#3f4244 100%)"></div>
<div class="abs" style="left:660.50px;top:55.20px;width:134.00px;height:1.60px;background:#4a88c7"></div>
<div class="abs" style="left:428.80px;top:33.70px;width:21.20px;height:21.20px;border-radius:50%;background:#c9b41f;opacity:0.930"></div>
<svg class="abs" style="left:436.50px;top:39.00px;width:9px;height:12px;" viewBox="0 0 9 12"><path d="M1 0.500v9l2.200-2 1.600 3.500 1.400-0.600-1.600-3.400h3z" fill="#fff" stroke="#333" stroke-width="0.600"/></svg>
<svg class="abs" style="left:1027.30px;top:47.00px;width:7px;height:8.3px;" viewBox="0 0 8 9.5"><path d="M2.800 0.500h2.400M3.200 0.500v3L0.800 8.500h6.400L4.800 3.500v-3z" fill="#b4b4b4" stroke="#b4b4b4" stroke-width="0.700"/></svg>
<span class="t" style="left:1035.90px;top:57.50px;transform:rotate(90deg);transform-origin:0 0;font-size:7.300px;color:#b4b4b4">Errors In Solution</span>
<svg class="abs" style="left:1027.30px;top:127.50px;width:7px;height:7px;" viewBox="0 0 8 8"><rect x="2.500" y="0.500" width="3" height="3" fill="#b4b4b4" transform="rotate(45 4 2)"/><rect x="0.300" y="2.800" width="3" height="3" fill="#b4b4b4" transform="rotate(45 1.800 4.300)"/><rect x="4.700" y="2.800" width="3" height="3" fill="#b4b4b4" transform="rotate(45 6.200 4.300)"/><rect x="2.500" y="5" width="3" height="3" fill="#b4b4b4" transform="rotate(45 4 6.500)"/></svg>
<span class="t" style="left:1035.90px;top:138.00px;transform:rotate(90deg);transform-origin:0 0;font-size:7.300px;color:#b4b4b4">IL Viewer</span>
<svg class="abs" style="left:1027.00px;top:182.50px;width:8px;height:8px;" viewBox="0 0 9 9"><path d="M0.800 0.800h6v3.500c0 2-1.500 3.500-3 4.200-1.500-0.700-3-2.200-3-4.200z" fill="#b4b4b4"/><circle cx="6.800" cy="2.800" r="1.800" fill="#d8d8d8"/></svg>
<span class="t" style="left:1035.90px;top:193.00px;transform:rotate(90deg);transform-origin:0 0;font-size:7.300px;color:#b4b4b4">Unit Tests Coverage</span>
<svg class="abs" style="left:1027.50px;top:274.50px;width:7px;height:8.3px;" viewBox="0 0 8 9.5"><ellipse cx="4" cy="2" rx="3.300" ry="1.500" fill="#b4b4b4"/><path d="M0.700 2v5.500c0 0.800 1.500 1.500 3.300 1.500s3.300-0.700 3.300-1.500V2" fill="#9a9a9a" stroke="#b4b4b4" stroke-width="0.600"/><path d="M0.700 4c0 0.800 1.500 1.500 3.300 1.500S7.300 4.800 7.300 4M0.700 6c0 0.800 1.500 1.500 3.300 1.500S7.300 6.800 7.300 6" fill="none" stroke="#3a3b3c" stroke-width="0.600"/></svg>
<span class="t" style="left:1035.90px;top:285.50px;transform:rotate(90deg);transform-origin:0 0;font-size:7.300px;color:#b4b4b4">Database</span>
<svg class="abs" style="left:21.50px;top:560.50px;width:7.5px;height:7px;" viewBox="0 0 7.5 7"><path d="M0 1h1.200M2.200 1h5.300M0 3.500h1.200M2.200 3.500h5.300M0 6h1.200M2.200 6h5.300" stroke="#b0b0b0" stroke-width="1.200"/></svg>
<span class="t" style="left:32.60px;top:559.90px;;font-size:7.25px;letter-spacing:-0.403px;">TODO</span>
<svg class="abs" style="left:67.50px;top:560.00px;width:9px;height:8.5px;" viewBox="0 0 9 8.5"><circle cx="5.500" cy="4.800" r="2.900" fill="none" stroke="#b0b0b0" stroke-width="1"/><path d="M5.500 1.900V0.600M0.300 3.500h2M0.300 5.800h2" stroke="#b0b0b0" stroke-width="0.900"/></svg>
<span class="t" style="left:79.90px;top:559.90px;;font-size:7.25px;letter-spacing:-0.114px;">Dynamic Program Analysis</span>
<svg class="abs" style="left:180.50px;top:560.00px;width:9px;height:8.5px;" viewBox="0 0 9 8.5"><circle cx="5.300" cy="3.500" r="2.800" fill="none" stroke="#b0b0b0" stroke-width="1"/><circle cx="3.500" cy="5" r="2.800" fill="#b0b0b0"/></svg>
<span class="t" style="left:191.50px;top:559.90px;;font-size:7.25px;letter-spacing:-0.020px;">Unit Tests</span>
<svg class="abs" style="left:238.50px;top:559.80px;width:8px;height:9px;" viewBox="0 0 8 9"><circle cx="4" cy="5" r="3" fill="none" stroke="#b0b0b0" stroke-width="1"/><path d="M4 3.500V5M3 0.700h2" stroke="#b0b0b0" stroke-width="0.900"/></svg>
<span class="t" style="left:250.00px;top:559.90px;;font-size:7.25px;letter-spacing:-0.054px;">dotTrace Profiler</span>
<svg class="abs" style="left:317.00px;top:560.30px;width:8.5px;height:7.5px;" viewBox="0 0 8.5 7.5"><rect x="0.300" y="0.300" width="7.900" height="6.900" fill="#b0b0b0"/><path d="M1.500 2l1.800 1.500L1.500 5M4 5.500h2.500" stroke="#3a3b3c" stroke-width="0.900" fill="none"/></svg>
<span class="t" style="left:328.80px;top:559.90px;;font-size:7.25px;letter-spacing:0.038px;">Terminal</span>
<svg class="abs" style="left:368.50px;top:559.80px;width:9px;height:9px;" viewBox="0 0 9 9"><path d="M5 0.800l3.200 1.800v3.600L5 8 1.800 6.200v-3.600z" fill="none" stroke="#b0b0b0" stroke-width="0.900"/><path d="M5 4.400V0.800M5 4.400l3.200 1.800M5 4.400L1.800 6.200" stroke="#b0b0b0" stroke-width="0.800"/><circle cx="1.500" cy="4.400" r="1.300" fill="#b0b0b0"/></svg>
<span class="t" style="left:380.90px;top:559.90px;;font-size:7.25px;letter-spacing:-0.284px;">Unity</span>
<div class="abs" style="left:975.50px;top:559.80px;width:8.00px;height:8.00px;border-radius:50% 50% 10% 50%;background:#5fa04e;color:#e8f5e0;font-size:5.500px;line-height:8px;text-align:center;font-weight:700">3</div>
<span class="t" style="left:986.80px;top:560.20px;;font-size:7.25px;letter-spacing:-0.161px;">Event Log</span>
<svg class="abs" style="left:3.50px;top:573.50px;width:8.5px;height:8px;" viewBox="0 0 8.5 8"><rect x="2" y="0.500" width="6" height="5.500" fill="none" stroke="#9a9a9a" stroke-width="0.900"/><path d="M0.500 2v5.500H6.500" fill="none" stroke="#9a9a9a" stroke-width="0.900"/></svg>
<span class="t" style="left:18.70px;top:573.30px;color:#bcbcbc;font-size:7.70px;letter-spacing:0.196px;">Enter completed an item instead of inserting a new line // OK with that // No, Enter should insert a new line when completion list is unfocused // Configure in settings (21 minutes ago)</span>
<span class="t" style="left:768.00px;top:573.30px;color:#7d7d7d;font-size:7.60px;letter-spacing:0.097px;">Assembly-CSharp</span>
<span class="t" style="left:841.80px;top:573.30px;;font-size:7.60px;letter-spacing:0.243px;">11:6</span>
<span class="t" style="left:864.80px;top:573.30px;;font-size:7.60px;letter-spacing:-0.412px;">CRLF</span>
<span class="t" style="left:890.30px;top:573.30px;;font-size:7.60px;letter-spacing:0.034px;">UTF-8</span>
<span class="t" style="left:919.90px;top:573.30px;;font-size:7.60px;letter-spacing:0.023px;">4 spaces</span>
<svg class="abs" style="left:957.00px;top:573.00px;width:8px;height:9px;" viewBox="0 0 8 9"><rect x="0.800" y="4" width="5" height="4.300" fill="#c4c4c4"/><path d="M2 4V2.300a1.700 1.700 0 0 1 3.400 0" fill="none" stroke="#c4c4c4" stroke-width="1"/></svg>
<svg class="abs" style="left:972.50px;top:573.00px;width:11px;height:9.5px;" viewBox="0 0 11 9.5"><circle cx="4.500" cy="4" r="3.300" fill="#c4c4c4"/><circle cx="8" cy="3.500" r="2" fill="#c4c4c4"/><circle cx="7.500" cy="7" r="2" fill="#c4c4c4"/></svg>
<svg class="abs" style="left:990.50px;top:573.00px;width:10px;height:10px;" viewBox="0 0 10 10"><circle cx="5" cy="5" r="4" fill="none" stroke="#5fb04e" stroke-width="1.100"/><path d="M3 5.200l1.500 1.500L7.200 3.500" fill="none" stroke="#5fb04e" stroke-width="1.100"/></svg>
<svg class="abs" style="left:1006.50px;top:573.50px;width:10px;height:9px;" viewBox="0 0 10 9"><path d="M0.500 0.800h9L5 8.500z" fill="#d0d0d0"/><path d="M3.500 2.500h3L5 5.500z" fill="#3a3b3c"/></svg>
<svg class="abs" style="left:1022.50px;top:573.00px;width:10px;height:10px;" viewBox="0 0 10 10"><path d="M8.500 1L1.500 5l7 4z" fill="none" stroke="#b4b4b4" stroke-width="1"/><circle cx="8.500" cy="9" r="1.100" fill="#5fb04e"/></svg>

</div>

<div id="card">
  <div id="q"><span style="letter-spacing:0.06px">Ruben, do you think it is worth to adapt the code specifically for</span>
<span style="letter-spacing:-0.04px">Unity using Scriptable Objects for the injections?</span></div>
  <div id="av">AB</div>
  <div id="nm">Alessandro</div>
  <div class="red" style="left:140px;top:73.7px;width:64px;height:12.8px;background:linear-gradient(90deg,#9b99c6 0%,#a29fcb 55%,#bcb3e0 100%)"></div>
  <div id="ttl">Software Engineer,</div>
  <div class="red" style="left:161px;top:92.5px;width:28px;height:23.5px;background:#bdb6e2"></div>
  <div class="red" style="left:66px;top:104.5px;width:91px;height:16.5px;background:linear-gradient(90deg,#b3b5e6 0%,#b6b3e2 70%,#c3bbe9 100%)"></div>
</div>

<div id="tile">
<svg viewBox="0 0 184 103.5">
  <defs>
    <linearGradient id="tbg" x1="0" y1="0" x2="0.15" y2="1">
      <stop offset="0" stop-color="#12bca4"/>
      <stop offset="0.18" stop-color="#10cdbf"/>
      <stop offset="0.42" stop-color="#0de2e6"/>
      <stop offset="0.7" stop-color="#10e4ec"/>
      <stop offset="1" stop-color="#14d8e0"/>
    </linearGradient>
    <radialGradient id="tvig" cx="0.55" cy="0.55" r="0.75">
      <stop offset="0" stop-color="#0a6" stop-opacity="0"/>
      <stop offset="0.6" stop-color="#0a6" stop-opacity="0"/>
      <stop offset="1" stop-color="#064" stop-opacity="0.28"/>
    </radialGradient>
    <linearGradient id="tfade" x1="0" y1="0" x2="0" y2="1">
      <stop offset="0" stop-color="#000" stop-opacity="0"/>
      <stop offset="0.68" stop-color="#000" stop-opacity="0"/>
      <stop offset="0.86" stop-color="#000" stop-opacity="0.62"/>
      <stop offset="1" stop-color="#000" stop-opacity="0.95"/>
    </linearGradient>
    <radialGradient id="skin" cx="0.45" cy="0.4" r="0.65">
      <stop offset="0" stop-color="#dcc6b8"/>
      <stop offset="0.55" stop-color="#c8aa98"/>
      <stop offset="1" stop-color="#94705e"/>
    </radialGradient>
    <filter id="b1" x="-5%" y="-5%" width="110%" height="110%" color-interpolation-filters="sRGB"><feConvolveMatrix order="3" kernelMatrix="1 2 1 2 4 2 1 2 1" divisor="16" edgeMode="duplicate"/></filter>
    <filter id="b2" x="-20%" y="-20%" width="140%" height="140%"><feGaussianBlur stdDeviation="1.4"/></filter>
  </defs>
  <rect width="184" height="103.5" fill="url(#tbg)"/>
  <rect width="184" height="103.5" fill="url(#tvig)"/>
  <g filter="url(#b1)">
    <!-- body -->
    <path d="M40 104 C43 90 50 79 62 72 C69 68.500 75 67 79 64 L112 61 C118 65.500 128 67.500 137 72 C148 78 153 90 157 104 Z" fill="#17171c"/>
    <!-- neck shadow -->
    <path d="M78 60h34v12h-34z" fill="#2a1f1c"/>
    <!-- headband -->
    <path d="M68.300 30 C69.500 14.500 82 9.300 94 9.300 C106.500 9.300 118.500 14.500 120.500 30" fill="none" stroke="#29292c" stroke-width="2.500"/>
    <!-- hair -->
    <path d="M70 36 C69 19 80 9.500 94 9.500 C108 9.500 119 19 118 36 C114 26 105 21.500 94 21.500 C83 21.500 74 26 70 36Z" fill="#4e4039"/>
    <path d="M78 16 C84 11.500 104 11.500 110 16 C104 14 84 14 78 16Z" fill="#7a6a60"/>
    <!-- face -->
    <path d="M73.500 36 C73.500 24 81 17.500 94 17.500 C107 17.500 114.500 24 114.500 36 L114.200 54 C113 68 104 80 94 80 C84 80 75 68 74 54 Z" fill="url(#skin)"/>
    <!-- beard -->
    <path d="M74 50 C76.500 55 80 57.500 84 59 C88 60.500 90 63 94 63 C98 63 101 60.500 105 58.500 C109 57 112.500 54 114.300 49 C116 61 113 71 107 77.500 C103 81.500 98 83.500 94 83.500 C89 83.500 84.500 81.500 80.500 77 C75 70 73 61 74 50Z" fill="#281b18"/>
    <!-- mouth -->
    <ellipse cx="93.500" cy="68.800" rx="5.500" ry="1.500" fill="#a87670"/>
    <!-- moustache -->
    <path d="M84 64 C88 59.500 99 59.500 104 64 C99 62.500 89 62.500 84 64Z" fill="#35241f"/>
    <!-- nose shadow -->
    <path d="M89.500 56.500 C92 58.500 96 58.500 98.500 56.500 C96 60 92 60 89.500 56.500Z" fill="#8c6858"/>
  </g>
    <!-- brows/eyes -->
    <g filter="url(#b1)" opacity="0.8"><ellipse cx="84.300" cy="45" rx="4.600" ry="1.900" fill="#4a342c"/><ellipse cx="103.300" cy="45" rx="4.600" ry="1.900" fill="#4a342c"/><path d="M79 42.500 C82 41 86 41 89.500 42.500 M98 42.500 C101.500 41 105.500 41 108.500 42.500" stroke="#6a5044" stroke-width="1.200" fill="none"/></g>
  <g filter="url(#b1)">
    <!-- ear cups -->
    <rect x="64.500" y="28" width="10.500" height="29.500" rx="5" fill="#26262a"/>
    <rect x="113.300" y="28.500" width="11" height="29" rx="5.200" fill="#26262a"/>
    <rect x="66.300" y="31" width="3" height="23" rx="1.500" fill="#5a4a44"/>
    <rect x="120" y="32" width="2.600" height="22" rx="1.300" fill="#4a4244"/>
    <!-- cable -->
    <path d="M118.500 57 C119 63 122 68 128 74" fill="none" stroke="#15151a" stroke-width="0.900"/>
    <!-- mic -->
    <ellipse cx="109.500" cy="83" rx="24.500" ry="8" fill="#1d1a24"/>
    <path d="M87 80.500 C95 75 123 74.500 132 80" fill="none" stroke="#4a4060" stroke-width="1.500"/>
    <path d="M131 82 C140 80.500 150 83 184 91.500" fill="none" stroke="#121216" stroke-width="1.900"/>
  </g>
  <rect width="184" height="103.5" fill="url(#tfade)"/>
  <!-- audio level bars -->
  <g fill="#56b947">
    <rect x="108.800" y="87.800" width="1.500" height="5.500" rx="0.700"/>
    <rect x="112" y="86" width="1.500" height="9" rx="0.700"/>
    <rect x="115.200" y="83.800" width="1.500" height="12.800" rx="0.700"/>
    <rect x="118.400" y="85.500" width="1.500" height="10" rx="0.700"/>
    <rect x="121.600" y="86.500" width="1.500" height="7.500" rx="0.700"/>
  </g>
</svg>

  <div id="host">HOST</div>
  <div id="rb">Ruben Bonet</div>
</div>
</body>
</html>
